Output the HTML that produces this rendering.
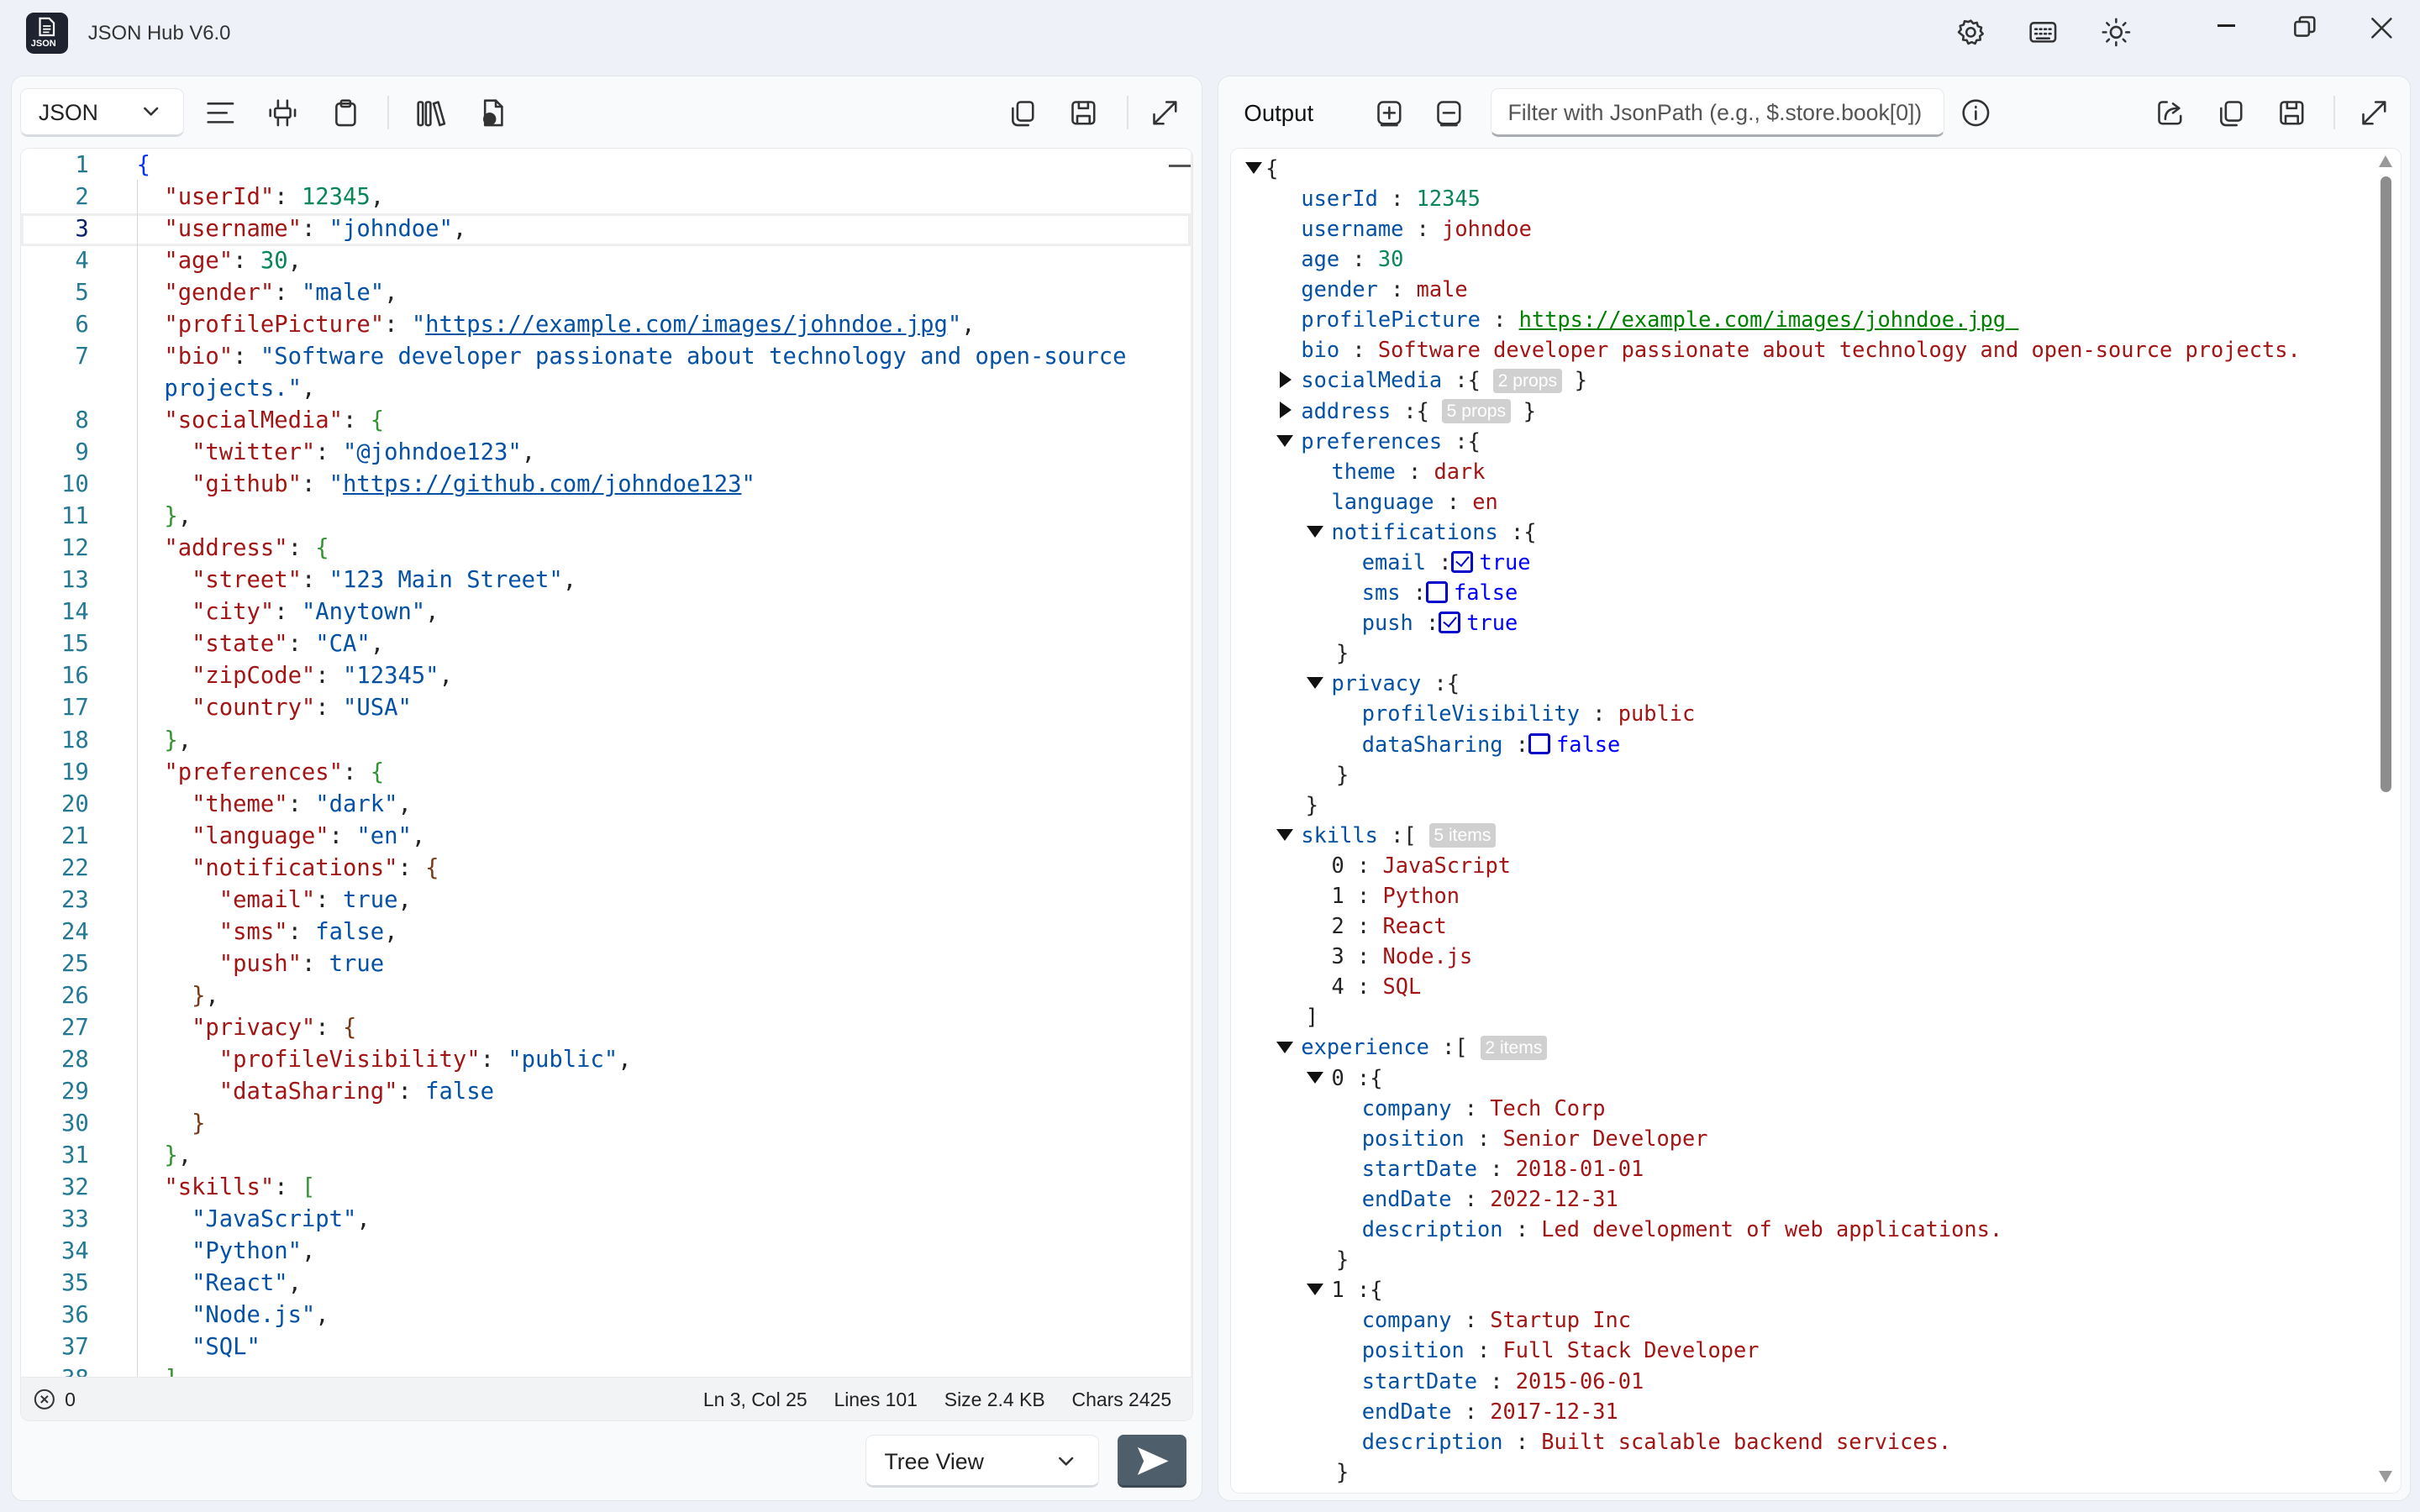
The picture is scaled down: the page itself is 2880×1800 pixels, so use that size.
<!DOCTYPE html>
<html><head><meta charset="utf-8"><style>
*{box-sizing:border-box;margin:0;padding:0}
html,body{width:2880px;height:1800px;overflow:hidden;background:#eef2f8}
#z{zoom:1.836735;width:1568px;height:980px;position:relative;font-family:"Liberation Sans",sans-serif;color:#222}
.a{position:absolute}
.ic{position:absolute;width:20px;height:20px;fill:none;stroke:#333;stroke-width:1.4;stroke-linecap:round;stroke-linejoin:round}
.panel{position:absolute;background:#f9fafc;border:1px solid #e2e5ea;border-radius:8px}
.mono{font-family:"DejaVu Sans Mono","Liberation Mono",monospace}
#ed{position:absolute;left:13px;top:96px;width:760px;height:797px;background:#fff;border:1px solid #e8eaee;border-radius:6px 6px 0 0;overflow:hidden}
.row{height:20.7px;line-height:20.7px;font-size:14.8px;white-space:pre;position:relative}
.ln{position:absolute;left:0;width:44px;text-align:right;color:#237893}
.cd{position:absolute;left:75px}
.k{color:#a31515}.s{color:#0451a5}.n{color:#098658}.b{color:#0451a5}
.p1{color:#0431fa}.p2{color:#319331}.p3{color:#7b3814}
.u{text-decoration:underline}
#tr{position:absolute;left:797px;top:96px;width:759px;height:872px;background:#fff;border:1px solid #e8eaee;border-radius:6px;overflow:hidden}
.t{height:19.65px;line-height:19.65px;font-size:13.8px;white-space:pre;position:absolute;color:#222}
.tk{color:#0451a5}.ts{color:#a31515}.tn{color:#098658}.tb{color:#0000ff}.tl{color:#008000;text-decoration:underline}
.tri{display:inline-block;width:0;height:0;position:absolute}
.dn{border-left:5.5px solid transparent;border-right:5.5px solid transparent;border-top:8px solid #111;top:6px}
.rt{border-top:5.5px solid transparent;border-bottom:5.5px solid transparent;border-left:8px solid #111;top:4px}
.bd{display:inline-block;background:#d0d0d0;color:#fff;font-family:"Liberation Sans",sans-serif;font-size:11.5px;line-height:16px;padding:0 3px;border-radius:2px;vertical-align:1px}
.cb{display:inline-block;width:14px;height:14px;border:2px solid #0000cc;border-radius:2px;vertical-align:-2px;position:relative;margin-right:4px}
.cb.c:after{content:"";position:absolute;left:3px;top:0px;width:4px;height:7px;border:solid #0000cc;border-width:0 1.6px 1.6px 0;transform:rotate(40deg)}
</style></head><body><div id="z">

<!-- title bar -->
<div class="a" style="left:17px;top:8px;width:27px;height:27px;background:#1f2330;border-radius:5px"></div>
<svg class="a" style="left:23px;top:11px" width="15" height="14" viewBox="0 0 15 14"><path d="M3 1h6l3 3v8H3z" fill="none" stroke="#fff" stroke-width="1.2"/><path d="M5 6h5M5 8h5M5 10h4" stroke="#fff" stroke-width="1"/></svg>
<div class="a" style="left:20px;top:25px;font-size:6px;color:#fff;font-weight:bold">JSON</div>
<div class="a" style="left:57px;top:14px;font-size:13px;color:#333">JSON Hub V6.0</div>
<svg class="ic" style="left:1267px;top:11px" viewBox="0 0 20 20"><circle cx="10" cy="10" r="2.8"/><path d="M10 2.5l1.6 1.8 2.4-.5.6 2.3 2.3.8-.6 2.3 1.5 1.8-1.9 1.5.3 2.4-2.4.3-1 2.2-2.2-1-2.2 1-1-2.2-2.4-.3.3-2.4L2.2 10l1.5-1.8-.6-2.3 2.3-.8.6-2.3 2.4.5z"/></svg>
<svg class="ic" style="left:1314px;top:11px" viewBox="0 0 20 20"><rect x="2" y="4" width="16" height="12" rx="2"/><path d="M5 8h1M8 8h1M11 8h1M14 8h1M5 11h1M8 11h1M11 11h1M14 11h1M6 14h8"/></svg>
<svg class="ic" style="left:1361px;top:11px" viewBox="0 0 20 20"><circle cx="10" cy="10" r="3.5"/><path d="M10 1.5v2M10 16.5v2M1.5 10h2M16.5 10h2M4 4l1.4 1.4M14.6 14.6L16 16M4 16l1.4-1.4M14.6 5.4L16 4"/></svg>
<div class="a" style="left:1437px;top:16px;width:11px;height:1.3px;background:#222"></div>
<svg class="ic" style="left:1483px;top:8px" viewBox="0 0 20 20"><rect x="4" y="6" width="9" height="9" rx="1.5"/><path d="M7 6V4.5A1.5 1.5 0 0 1 8.5 3H15a1.5 1.5 0 0 1 1.5 1.5V11A1.5 1.5 0 0 1 15 12.5h-2"/></svg>
<svg class="ic" style="left:1533px;top:8px" viewBox="0 0 20 20"><path d="M4 4l12 12M16 4L4 16"/></svg>

<!-- left panel -->
<div class="panel" style="left:7px;top:49px;width:772px;height:924px"></div>
<div class="a" style="left:13px;top:57px;width:106px;height:32px;background:#fff;border:1px solid #e6e8ec;border-bottom:2px solid #d8dbe0;border-radius:5px"></div>
<div class="a" style="left:25px;top:65px;font-size:14.5px;color:#222">JSON</div>
<svg class="ic" style="left:90px;top:64px;width:16px;height:16px" viewBox="0 0 16 16"><path d="M4 6l4 4 4-4"/></svg>
<svg class="ic" style="left:133px;top:63px" viewBox="0 0 20 20"><path d="M2 4h16M2 10h12M2 16h16"/></svg>
<svg class="ic" style="left:173px;top:63px" viewBox="0 0 20 20"><path d="M7 2v4M13 2v4M7 14v4M13 14v4M2 8v4M18 8v4"/><rect x="5" y="7" width="10" height="6" rx="1"/></svg>
<svg class="ic" style="left:214px;top:63px" viewBox="0 0 20 20"><rect x="4" y="4" width="12" height="14" rx="2"/><rect x="7" y="2" width="6" height="4" rx="1"/></svg>
<div class="a" style="left:251px;top:62px;width:1px;height:22px;background:#e0e2e6"></div>
<svg class="ic" style="left:269px;top:63px" viewBox="0 0 20 20"><rect x="2" y="3" width="3" height="15" rx="1"/><rect x="7" y="3" width="3" height="15" rx="1"/><path d="M12 4l3-1 4 14-3 1z"/></svg>
<svg class="ic" style="left:309px;top:63px" viewBox="0 0 20 20"><path d="M5 2h7l4 4v12H5z"/><path d="M12 2v4h4"/><circle cx="8" cy="14" r="3.5" fill="#333"/></svg>
<svg class="ic" style="left:652px;top:63px" viewBox="0 0 20 20"><rect x="7" y="3" width="10" height="12" rx="2"/><path d="M4 7v8a3 3 0 0 0 3 3h7"/></svg>
<svg class="ic" style="left:692px;top:63px" viewBox="0 0 20 20"><rect x="3" y="3" width="14" height="14" rx="2"/><path d="M7 3v4h6V3M6 17v-5h8v5"/></svg>
<div class="a" style="left:730px;top:62px;width:1px;height:22px;background:#e0e2e6"></div>
<svg class="ic" style="left:745px;top:63px" viewBox="0 0 20 20"><path d="M3 17L17 3M11 3h6v6M3 11v6h6"/></svg>

<div id="ed" class="mono">
<div class="a" style="left:0;top:42px;width:758px;height:21px;border:2px solid #eeeeee"></div>
<div class="a" style="left:75px;top:20px;width:1px;height:780px;background:#d6d6d6"></div>
<div class="a" style="left:744px;top:10px;width:14px;height:2px;background:#555"></div>
<div style="position:absolute;left:0;top:0.5px;width:740px">
<div class="row"><span class="ln">1</span><span class="cd"><span class="p1">{</span></span></div>
<div class="row"><span class="ln">2</span><span class="cd">  <span class="k">"userId"</span>: <span class="n">12345</span>,</span></div>
<div class="row"><span class="ln" style="color:#0b216f">3</span><span class="cd">  <span class="k">"username"</span>: <span class="s">"johndoe"</span>,</span></div>
<div class="row"><span class="ln">4</span><span class="cd">  <span class="k">"age"</span>: <span class="n">30</span>,</span></div>
<div class="row"><span class="ln">5</span><span class="cd">  <span class="k">"gender"</span>: <span class="s">"male"</span>,</span></div>
<div class="row"><span class="ln">6</span><span class="cd">  <span class="k">"profilePicture"</span>: <span class="s">"<span class="u">https://example.com/images/johndoe.jpg</span>"</span>,</span></div>
<div class="row"><span class="ln">7</span><span class="cd">  <span class="k">"bio"</span>: <span class="s">"Software developer passionate about technology and open-source</span></span></div>
<div class="row"><span class="cd">  <span class="s">projects."</span>,</span></div>
<div class="row"><span class="ln">8</span><span class="cd">  <span class="k">"socialMedia"</span>: <span class="p2">{</span></span></div>
<div class="row"><span class="ln">9</span><span class="cd">    <span class="k">"twitter"</span>: <span class="s">"@johndoe123"</span>,</span></div>
<div class="row"><span class="ln">10</span><span class="cd">    <span class="k">"github"</span>: <span class="s">"<span class="u">https://github.com/johndoe123</span>"</span></span></div>
<div class="row"><span class="ln">11</span><span class="cd">  <span class="p2">}</span>,</span></div>
<div class="row"><span class="ln">12</span><span class="cd">  <span class="k">"address"</span>: <span class="p2">{</span></span></div>
<div class="row"><span class="ln">13</span><span class="cd">    <span class="k">"street"</span>: <span class="s">"123 Main Street"</span>,</span></div>
<div class="row"><span class="ln">14</span><span class="cd">    <span class="k">"city"</span>: <span class="s">"Anytown"</span>,</span></div>
<div class="row"><span class="ln">15</span><span class="cd">    <span class="k">"state"</span>: <span class="s">"CA"</span>,</span></div>
<div class="row"><span class="ln">16</span><span class="cd">    <span class="k">"zipCode"</span>: <span class="s">"12345"</span>,</span></div>
<div class="row"><span class="ln">17</span><span class="cd">    <span class="k">"country"</span>: <span class="s">"USA"</span></span></div>
<div class="row"><span class="ln">18</span><span class="cd">  <span class="p2">}</span>,</span></div>
<div class="row"><span class="ln">19</span><span class="cd">  <span class="k">"preferences"</span>: <span class="p2">{</span></span></div>
<div class="row"><span class="ln">20</span><span class="cd">    <span class="k">"theme"</span>: <span class="s">"dark"</span>,</span></div>
<div class="row"><span class="ln">21</span><span class="cd">    <span class="k">"language"</span>: <span class="s">"en"</span>,</span></div>
<div class="row"><span class="ln">22</span><span class="cd">    <span class="k">"notifications"</span>: <span class="p3">{</span></span></div>
<div class="row"><span class="ln">23</span><span class="cd">      <span class="k">"email"</span>: <span class="b">true</span>,</span></div>
<div class="row"><span class="ln">24</span><span class="cd">      <span class="k">"sms"</span>: <span class="b">false</span>,</span></div>
<div class="row"><span class="ln">25</span><span class="cd">      <span class="k">"push"</span>: <span class="b">true</span></span></div>
<div class="row"><span class="ln">26</span><span class="cd">    <span class="p3">}</span>,</span></div>
<div class="row"><span class="ln">27</span><span class="cd">    <span class="k">"privacy"</span>: <span class="p3">{</span></span></div>
<div class="row"><span class="ln">28</span><span class="cd">      <span class="k">"profileVisibility"</span>: <span class="s">"public"</span>,</span></div>
<div class="row"><span class="ln">29</span><span class="cd">      <span class="k">"dataSharing"</span>: <span class="b">false</span></span></div>
<div class="row"><span class="ln">30</span><span class="cd">    <span class="p3">}</span></span></div>
<div class="row"><span class="ln">31</span><span class="cd">  <span class="p2">}</span>,</span></div>
<div class="row"><span class="ln">32</span><span class="cd">  <span class="k">"skills"</span>: <span class="p2">[</span></span></div>
<div class="row"><span class="ln">33</span><span class="cd">    <span class="s">"JavaScript"</span>,</span></div>
<div class="row"><span class="ln">34</span><span class="cd">    <span class="s">"Python"</span>,</span></div>
<div class="row"><span class="ln">35</span><span class="cd">    <span class="s">"React"</span>,</span></div>
<div class="row"><span class="ln">36</span><span class="cd">    <span class="s">"Node.js"</span>,</span></div>
<div class="row"><span class="ln">37</span><span class="cd">    <span class="s">"SQL"</span></span></div>
<div class="row"><span class="ln">38</span><span class="cd">  <span class="p2">]</span>,</span></div>
</div>
<div class="a" style="left:758px;top:0;width:1px;height:797px;background:#eee"></div>
</div>
<div class="a" style="left:13px;top:893px;width:760px;height:28px;background:#f2f3f5;border:1px solid #e8eaee;border-top:none;border-radius:0 0 6px 6px"></div>
<svg class="a" style="left:22px;top:900px" width="14" height="14" viewBox="0 0 14 14"><circle cx="7" cy="7" r="6" fill="none" stroke="#333" stroke-width="1.1"/><path d="M4.8 4.8l4.4 4.4M9.2 4.8l-4.4 4.4" stroke="#333" stroke-width="1.1"/></svg>
<div class="a" style="left:42px;top:900px;font-size:12.5px">0</div>
<div class="a" style="right:809px;top:900px;font-size:12.5px;white-space:pre;color:#222">Ln 3, Col 25     Lines 101     Size 2.4 KB     Chars 2425</div>
<div class="a" style="left:561px;top:930px;width:151px;height:34px;background:#fff;border:1px solid #e6e8ec;border-bottom:2px solid #d8dbe0;border-radius:5px"></div>
<div class="a" style="left:573px;top:939px;font-size:14.5px">Tree View</div>
<svg class="ic" style="left:683px;top:939px;width:16px;height:16px" viewBox="0 0 16 16"><path d="M4 6l4 4 4-4"/></svg>
<div class="a" style="left:724px;top:930px;width:45px;height:34px;background:#4f5e6b;border-radius:4px;border-bottom:2px solid #3b4752"></div>
<svg class="a" style="left:736px;top:937px" width="22" height="20" viewBox="0 0 22 20"><path d="M1 1l20 9-20 9 4-9z" fill="#fff"/></svg>

<!-- right panel -->
<div class="panel" style="left:789px;top:49px;width:773px;height:924px"></div>
<div class="a" style="left:806px;top:65px;font-size:15px;color:#111">Output</div>
<svg class="ic" style="left:890px;top:63px" viewBox="0 0 20 20"><rect x="3" y="3" width="14" height="14" rx="3"/><path d="M10 6.5v7M6.5 10h7M5 18h10"/></svg>
<svg class="ic" style="left:929px;top:63px" viewBox="0 0 20 20"><rect x="3" y="3" width="14" height="14" rx="3"/><path d="M6.5 10h7M5 18h10"/></svg>
<div class="a" style="left:966px;top:57px;width:294px;height:32px;background:#fff;border:1px solid #e6e8ec;border-bottom:2px solid #a9acb1;border-radius:5px"></div>
<div class="a" style="left:977px;top:65px;font-size:14.5px;color:#555">Filter with JsonPath (e.g., $.store.book[0])</div>
<svg class="ic" style="left:1270px;top:63px" viewBox="0 0 20 20"><circle cx="10" cy="10" r="8"/><path d="M10 9v5M10 6v.5"/></svg>
<svg class="ic" style="left:1396px;top:63px" viewBox="0 0 20 20"><path d="M8 3H5a2 2 0 0 0-2 2v10a2 2 0 0 0 2 2h10a2 2 0 0 0 2-2v-3"/><path d="M7 14c0-5 3-7 8-7M12 4l4 3-4 3"/></svg>
<svg class="ic" style="left:1435px;top:63px" viewBox="0 0 20 20"><rect x="7" y="3" width="10" height="12" rx="2"/><path d="M4 7v8a3 3 0 0 0 3 3h7"/></svg>
<svg class="ic" style="left:1475px;top:63px" viewBox="0 0 20 20"><rect x="3" y="3" width="14" height="14" rx="2"/><path d="M7 3v4h6V3M6 17v-5h8v5"/></svg>
<div class="a" style="left:1512px;top:62px;width:1px;height:22px;background:#e0e2e6"></div>
<svg class="ic" style="left:1528px;top:63px" viewBox="0 0 20 20"><path d="M3 17L17 3M11 3h6v6M3 11v6h6"/></svg>

<div id="tr" class="mono">
<div class="a" style="left:745px;top:18px;width:7px;height:399px;background:#8d8d8d;border-radius:4px"></div>
<div class="a" style="left:744px;top:4px;width:0;height:0;border-left:4.5px solid transparent;border-right:4.5px solid transparent;border-bottom:8px solid #999"></div>
<div class="a" style="left:744px;top:857px;width:0;height:0;border-left:4.5px solid transparent;border-right:4.5px solid transparent;border-top:8px solid #999"></div>
</div>
<div class="a mono" style="left:797px;top:99px;width:740px;height:867px;overflow:hidden" id="tt"></div>
<script>
var R=[
[0,'dn','{'],
[1,'','<span class="tk">userId</span> : <span class="tn">12345</span>'],
[1,'','<span class="tk">username</span> : <span class="ts">johndoe</span>'],
[1,'','<span class="tk">age</span> : <span class="tn">30</span>'],
[1,'','<span class="tk">gender</span> : <span class="ts">male</span>'],
[1,'','<span class="tk">profilePicture</span> : <span class="tl">https://example.com/images/johndoe.jpg </span>'],
[1,'','<span class="tk">bio</span> : <span class="ts">Software developer passionate about technology and open-source projects.</span>'],
[1,'rt','<span class="tk">socialMedia</span> :{ <span class="bd">2 props</span> }'],
[1,'rt','<span class="tk">address</span> :{ <span class="bd">5 props</span> }'],
[1,'dn','<span class="tk">preferences</span> :{'],
[2,'','<span class="tk">theme</span> : <span class="ts">dark</span>'],
[2,'','<span class="tk">language</span> : <span class="ts">en</span>'],
[2,'dn','<span class="tk">notifications</span> :{'],
[3,'','<span class="tk">email</span> :<span class="cb c"></span><span class="tb">true</span>'],
[3,'','<span class="tk">sms</span> :<span class="cb"></span><span class="tb">false</span>'],
[3,'','<span class="tk">push</span> :<span class="cb c"></span><span class="tb">true</span>'],
[2.15,'','}'],
[2,'dn','<span class="tk">privacy</span> :{'],
[3,'','<span class="tk">profileVisibility</span> : <span class="ts">public</span>'],
[3,'','<span class="tk">dataSharing</span> :<span class="cb"></span><span class="tb">false</span>'],
[2.15,'','}'],
[1.15,'','}'],
[1,'dn','<span class="tk">skills</span> :[ <span class="bd">5 items</span>'],
[2,'','0 : <span class="ts">JavaScript</span>'],
[2,'','1 : <span class="ts">Python</span>'],
[2,'','2 : <span class="ts">React</span>'],
[2,'','3 : <span class="ts">Node.js</span>'],
[2,'','4 : <span class="ts">SQL</span>'],
[1.15,'',']'],
[1,'dn','<span class="tk">experience</span> :[ <span class="bd">2 items</span>'],
[2,'dn','0 :{'],
[3,'','<span class="tk">company</span> : <span class="ts">Tech Corp</span>'],
[3,'','<span class="tk">position</span> : <span class="ts">Senior Developer</span>'],
[3,'','<span class="tk">startDate</span> : <span class="ts">2018-01-01</span>'],
[3,'','<span class="tk">endDate</span> : <span class="ts">2022-12-31</span>'],
[3,'','<span class="tk">description</span> : <span class="ts">Led development of web applications.</span>'],
[2.15,'','}'],
[2,'dn','1 :{'],
[3,'','<span class="tk">company</span> : <span class="ts">Startup Inc</span>'],
[3,'','<span class="tk">position</span> : <span class="ts">Full Stack Developer</span>'],
[3,'','<span class="tk">startDate</span> : <span class="ts">2015-06-01</span>'],
[3,'','<span class="tk">endDate</span> : <span class="ts">2017-12-31</span>'],
[3,'','<span class="tk">description</span> : <span class="ts">Built scalable backend services.</span>'],
[2.15,'','}'],
[2.15,'','}']
];
var h='';
for(var i=0;i<R.length;i++){var r=R[i],lv=r[0],x;
 if(lv===0)x=23;else x=46+(lv-1)*19.7;
 var tri='';
 if(r[1]){var tx=(lv===0?10:x-16);tri='<span class="tri '+r[1]+'" style="left:'+(r[1]=='rt'?tx+2:tx)+'px"></span>';}
 h+='<div class="t" style="top:'+(i*19.65)+'px;left:0;width:740px">'+tri+'<span style="position:absolute;left:'+x+'px">'+r[2]+'</span></div>';}
document.getElementById('tt').innerHTML=h;
</script>
</div></body></html>
